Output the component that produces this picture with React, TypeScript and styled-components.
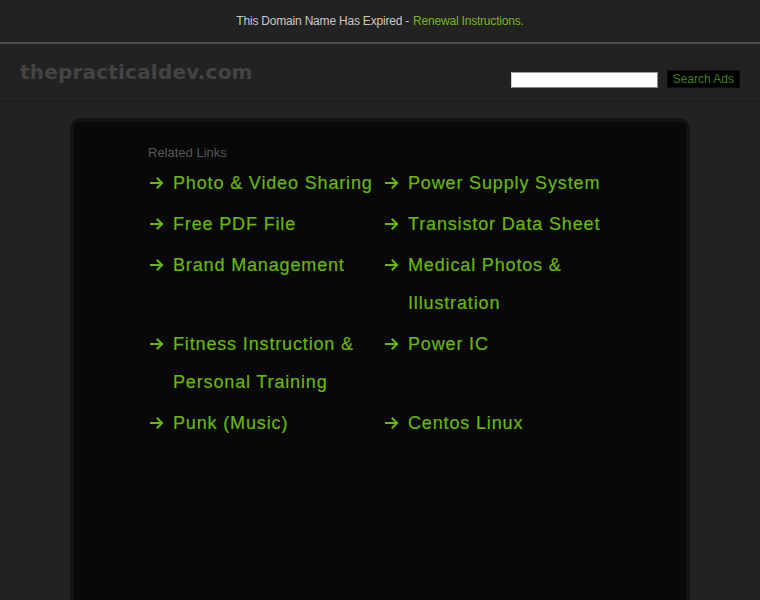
import React from "react";
import styled, { createGlobalStyle } from "styled-components";

const GlobalStyle = createGlobalStyle`
  html, body {
    margin: 0;
    padding: 0;
    background: #222222;
    font-family: "Liberation Sans", Arial, sans-serif;
  }
`;

const TopBar = styled.div`
  height: 42px;
  display: flex;
  align-items: center;
  justify-content: center;
  border-bottom: 2px solid #4b4b4b;
  font-size: 12px;
  letter-spacing: -0.2px;
  color: #c8c8c8;
`;

const TopLink = styled.a`
  color: #79b51c;
  text-decoration: none;
  margin-left: 4px;
`;

const Header = styled.header`
  height: 57px;
  display: flex;
  justify-content: space-between;
  padding: 0 20px;
  border-bottom: 1px solid #1b1b1b;
`;

const Logo = styled.div`
  font-family: "DejaVu Sans", Verdana, sans-serif;
  font-weight: bold;
  font-size: 20px;
  color: #444444;
  padding-top: 16px;
  letter-spacing: 0.2px;
`;

const SearchForm = styled.form`
  display: flex;
  align-items: center;
  gap: 9px;
  padding-top: 27px;
  align-self: flex-start;
`;

const SearchInput = styled.input`
  width: 141px;
  height: 12px;
  border: 1px solid #8a8a8a;
  border-top-color: #9a9a9a;
  border-left-color: #cfcfcf;
  background: #ffffff;
  padding: 1px 2px;
  margin: 0 0 0 2px;
`;

const SearchButton = styled.button`
  height: 18px;
  background: #000000;
  border: 1px solid #0d0d0d;
  color: #3f800c;
  font-family: "Liberation Sans", Arial, sans-serif;
  font-size: 12px;
  padding: 0 5px;
  margin: -1px 0 0;
`;

const Main = styled.main`
  padding-top: 16px;
`;

const Card = styled.section`
  width: 620px;
  min-height: 520px;
  margin: 0 auto;
  border: 4px solid #141414;
  border-radius: 10px;
  background: #080808;
  padding: 23px 0 0 74px;
  box-sizing: border-box;
`;

const Heading = styled.h2`
  margin: 0;
  font-weight: normal;
  font-size: 13px;
  line-height: 16px;
  color: #575757;
`;

const LinkGrid = styled.ul`
  list-style: none;
  margin: 3px 0 0;
  padding: 0;
  display: grid;
  grid-template-columns: 235px 235px;
  row-gap: 3px;
`;

const LinkItem = styled.li`
  display: flex;
  font-size: 18px;
  line-height: 38px;
  color: #67b80a;
`;

const ArrowBox = styled.span`
  flex: 0 0 25px;
  height: 38px;
  display: flex;
  align-items: center;
  padding-left: 2px;
  box-sizing: border-box;
`;

const LinkText = styled.a`
  color: inherit;
  text-decoration: none;
  letter-spacing: 0.85px;
  -webkit-text-stroke: 0.2px #67b80a;
`;

const Arrow = () => (
  <svg width="14" height="12" viewBox="0 0 14 12" fill="none">
    <path
      d="M1 6h11M7.5 1.5L12 6l-4.5 4.5"
      stroke="#67b80a"
      strokeWidth="2"
      strokeLinecap="square"
    />
  </svg>
);

const links = [
  "Photo & Video Sharing",
  "Power Supply System",
  "Free PDF File",
  "Transistor Data Sheet",
  "Brand Management",
  "Medical Photos & Illustration",
  "Fitness Instruction & Personal Training",
  "Power IC",
  "Punk (Music)",
  "Centos Linux",
];

export default function App() {
  return (
    <>
      <GlobalStyle />
      <TopBar>
        This Domain Name Has Expired -
        <TopLink href="#">Renewal Instructions.</TopLink>
      </TopBar>
      <Header>
        <Logo>thepracticaldev.com</Logo>
        <SearchForm onSubmit={(e) => e.preventDefault()}>
          <SearchInput type="text" />
          <SearchButton type="submit">Search Ads</SearchButton>
        </SearchForm>
      </Header>
      <Main>
        <Card>
          <Heading>Related Links</Heading>
          <LinkGrid>
            {links.map((label) => (
              <LinkItem key={label}>
                <ArrowBox>
                  <Arrow />
                </ArrowBox>
                <LinkText href="#">{label}</LinkText>
              </LinkItem>
            ))}
          </LinkGrid>
        </Card>
      </Main>
    </>
  );
}
